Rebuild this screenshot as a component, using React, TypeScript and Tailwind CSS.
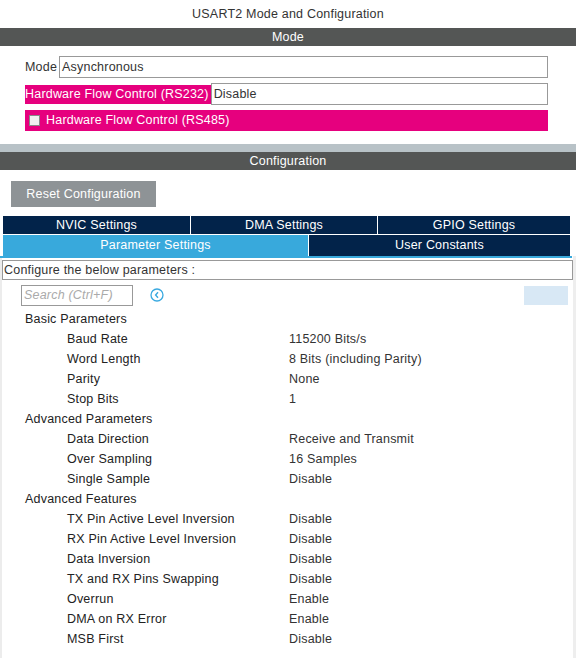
const rows: { label: string; value?: string; group?: boolean }[] = [
  { label: "Basic Parameters", group: true },
  { label: "Baud Rate", value: "115200 Bits/s" },
  { label: "Word Length", value: "8 Bits (including Parity)" },
  { label: "Parity", value: "None" },
  { label: "Stop Bits", value: "1" },
  { label: "Advanced Parameters", group: true },
  { label: "Data Direction", value: "Receive and Transmit" },
  { label: "Over Sampling", value: "16 Samples" },
  { label: "Single Sample", value: "Disable" },
  { label: "Advanced Features", group: true },
  { label: "TX Pin Active Level Inversion", value: "Disable" },
  { label: "RX Pin Active Level Inversion", value: "Disable" },
  { label: "Data Inversion", value: "Disable" },
  { label: "TX and RX Pins Swapping", value: "Disable" },
  { label: "Overrun", value: "Enable" },
  { label: "DMA on RX Error", value: "Enable" },
  { label: "MSB First", value: "Disable" },
];

export default function App() {
  return (
    <div className="w-[576px] h-[658px] bg-white overflow-hidden text-[12.5px] tracking-[0.2px] leading-none font-['Liberation_Sans',Arial,sans-serif]">
      {/* Title */}
      <div className="h-[28px] flex items-center justify-center text-[#333]">
        USART2 Mode and Configuration
      </div>

      {/* Mode header */}
      <div className="h-[18px] bg-[#545655] text-white flex items-center justify-center">Mode</div>

      <div className="pl-[25px] pr-[28px] pt-[10px]">
        <div className="flex items-center h-[22px]">
          <span className="text-[#333] mr-[2px]">Mode</span>
          <div className="flex-1 h-[22px] border border-[#999] flex items-center pl-[2px] text-[#333]">Asynchronous</div>
        </div>
        <div className="flex items-center h-[22px] mt-[5px]">
          <span className="bg-[#e6007e] text-white h-[19px] flex items-center pr-[2px]">Hardware Flow Control (RS232)</span>
          <div className="flex-1 h-[22px] border border-[#999] flex items-center pl-[2px] text-[#333]">Disable</div>
        </div>
        <div className="h-[21px] mt-[5px] bg-[#e6007e] text-white flex items-center pl-[4px]">
          <span className="w-[11px] h-[11px] bg-[#f0f0f0] border border-[#888] mr-[6px]"></span>
          Hardware Flow Control (RS485)
        </div>
      </div>

      {/* Configuration header */}
      <div className="mt-[13px] h-[8px] bg-[#b8c2c7]"></div>
      <div className="h-[18px] bg-[#545655] text-white flex items-center justify-center">Configuration</div>

      <div className="pl-[11px] pt-[11px]">
        <div className="w-[145px] h-[26px] bg-[#8e9396] text-white flex items-center justify-center">Reset Configuration</div>
      </div>

      {/* Tabs */}
      <div className="ml-[3px] w-[567px] mt-[9px]">
        <div className="flex h-[18px] bg-[#02234a] text-white">
          <div className="w-[188px] flex items-center justify-center border-r border-white">NVIC Settings</div>
          <div className="w-[187px] flex items-center justify-center border-r border-white">DMA Settings</div>
          <div className="flex-1 flex items-center justify-center">GPIO Settings</div>
        </div>
        <div className="flex h-[21px] mt-[1px] text-white">
          <div className="w-[305px] bg-[#38a9dc] flex items-center justify-center">Parameter Settings</div>
          <div className="flex-1 bg-[#02234a] flex items-center justify-center border-l border-white">User Constants</div>
        </div>
      </div>

      {/* Parameter panel */}
      <div className="flex h-[404px]">
        <div className="w-[2px] bg-[#ececec]"></div>
        <div className="flex-1 flex flex-col">
          <div className="h-[2px] bg-[#38a9dc] w-[572px] -ml-[2px]"></div>
          <div className="mt-[2px] h-[20px] border border-[#999] flex items-center pl-[1px] text-[#333] w-[571px]">
            Configure the below parameters :
          </div>
          <div className="flex items-center h-[22px] mt-[4px]">
            <div className="ml-[19px] w-[112px] h-[21px] border border-[#999] flex items-center pl-[2px] italic text-[#aaa]">
              Search (Ctrl+F)
            </div>
            <svg className="ml-[17px]" width="14" height="14" viewBox="0 0 14 14">
              <circle cx="7" cy="7" r="6" fill="none" stroke="#39a9e0" strokeWidth="1.3" />
              <path d="M8 4.2 L5.6 7 L8 9.8" fill="none" stroke="#39a9e0" strokeWidth="1.4" />
            </svg>
            <div className="ml-auto mr-[5px] w-[44px] h-[19px] bg-[#d8e8f5]"></div>
          </div>
          <div className="mt-[3px]">
            {rows.map((r, i) => (
              <div key={i} className="h-[20px] flex items-center text-[#222]">
                {r.group ? (
                  <span className="ml-[23px]">{r.label}</span>
                ) : (
                  <>
                    <span className="ml-[65px] w-[222px]">{r.label}</span>
                    <span className="text-[#333]">{r.value}</span>
                  </>
                )}
              </div>
            ))}
          </div>
        </div>
        <div className="w-[3px] bg-[#eeeeee]"></div>
      </div>
    </div>
  );
}
